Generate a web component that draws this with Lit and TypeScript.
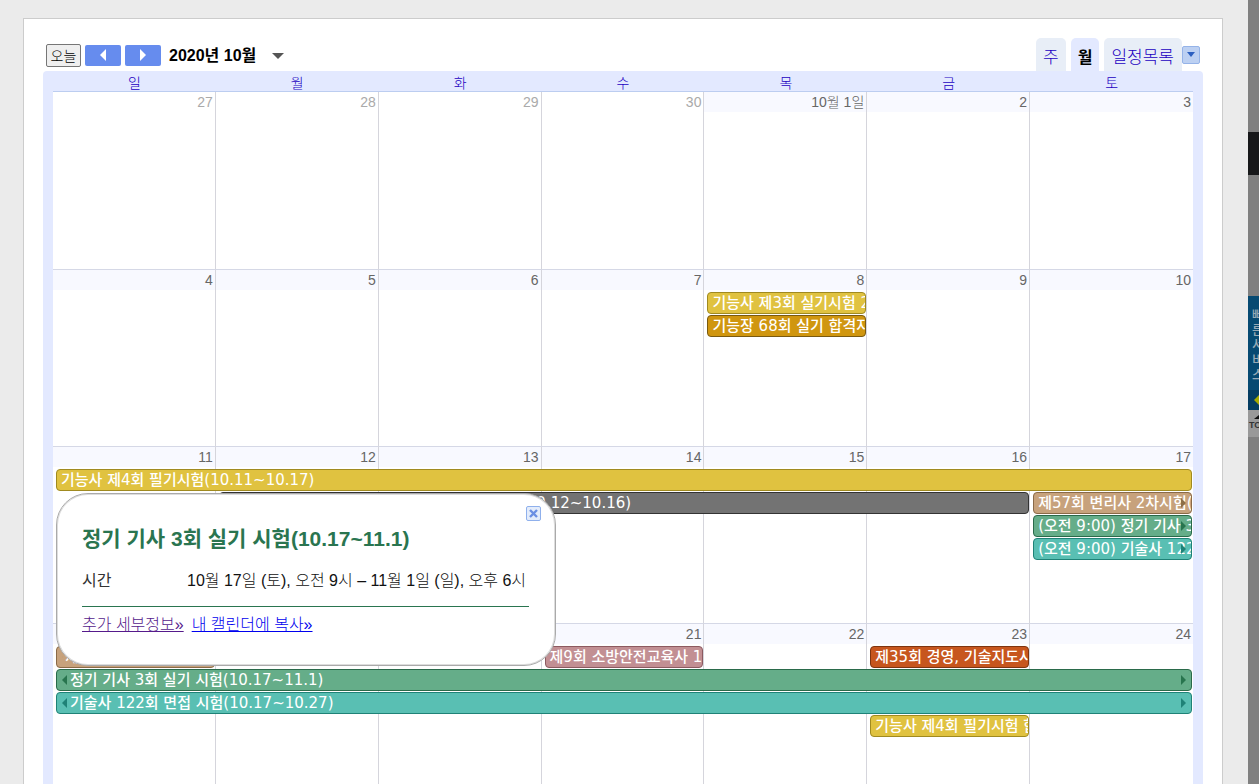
import { LitElement, html, svg, css, nothing } from "lit";
import { customElement, property } from "lit/decorators.js";
import { classMap } from "lit/directives/class-map.js";
import { styleMap } from "lit/directives/style-map.js";

interface CalEvent {
  title: string;
  tone: string;
  start: number;
  span: number;
  line: number;
  before?: boolean;
  after?: boolean;
}

interface Week {
  days: string[];
  outside?: number;
  events: CalEvent[];
  popup?: boolean;
}

const WEEKDAYS = ["일", "월", "화", "수", "목", "금", "토"];

const WEEKS: Week[] = [
  { days: ["27", "28", "29", "30", "10월 1일", "2", "3"], outside: 4, events: [] },
  {
    days: ["4", "5", "6", "7", "8", "9", "10"],
    events: [
      { title: "기능사 제3회 실기시험 2차", tone: "yellow", start: 5, span: 1, line: 2 },
      { title: "기능장 68회 실기 합격자", tone: "amber", start: 5, span: 1, line: 3 },
    ],
  },
  {
    days: ["11", "12", "13", "14", "15", "16", "17"],
    popup: true,
    events: [
      { title: "기능사 제4회 필기시험(10.11~10.17)", tone: "yellow", start: 1, span: 7, line: 2 },
      { title: "정기 기사 3회 실기 시험 및 기술사 122회 면접(10.12~10.16)", tone: "gray", start: 2, span: 5, line: 3 },
      { title: "제57회 변리사 2차시험(10.17~10.18)", tone: "tan", start: 7, span: 1, line: 3, after: true },
      { title: "(오전 9:00) 정기 기사 3회 실기 시험", tone: "green", start: 7, span: 1, line: 4, after: true },
      { title: "(오전 9:00) 기술사 122회 면접 시험", tone: "teal", start: 7, span: 1, line: 5, after: true },
    ],
  },
  {
    days: ["18", "19", "20", "21", "22", "23", "24"],
    events: [
      { title: "제57회 변리사 2차시험", tone: "tan", start: 1, span: 1, line: 2, before: true },
      { title: "제9회 소방안전교육사 1차", tone: "rose", start: 4, span: 1, line: 2 },
      { title: "제35회 경영, 기술지도사", tone: "orange", start: 6, span: 1, line: 2 },
      { title: "정기 기사 3회 실기 시험(10.17~11.1)", tone: "green", start: 1, span: 7, line: 3, before: true, after: true },
      { title: "기술사 122회 면접 시험(10.17~10.27)", tone: "teal", start: 1, span: 7, line: 4, before: true, after: true },
      { title: "기능사 제4회 필기시험 합격자", tone: "yellow", start: 6, span: 1, line: 5 },
    ],
  },
];

const tri = (d: string, w: number, h: number) => html`<svg width=${w} height=${h} viewBox="0 0 ${w} ${h}" aria-hidden="true">${svg`<path d=${d} fill="currentColor"/>`}</svg>`;

@customElement("event-popup")
export class EventPopup extends LitElement {
  static styles = css`
    :host {
      display: block;
      box-sizing: border-box;
      background: #fff;
      border: 1px solid #aaa;
      box-shadow: inset 0 0 0 1px #ddd;
      border-radius: 32px;
      padding: 30px 26px 30px 25px;
      font: 300 16px/20px "Liberation Sans", "Noto Sans CJK KR", sans-serif;
      color: #111;
    }
    .title {
      margin: 0;
      font-size: 21px;
      line-height: 30px;
      font-weight: 700;
      color: #2a7550;
      white-space: nowrap;
    }
    .row {
      display: grid;
      grid-template-columns: 105px 1fr;
      margin: 17px 0 15px;
      white-space: nowrap;
    }
    .row dt { color: #333; font-weight: 400; }
    .row dd { margin: 0; }
    .links {
      display: flex;
      gap: 8px;
      border-top: 1px solid #2a7550;
      padding-top: 8px;
    }
    a { color: #0000ee; }
    .visited { color: #551a8b; }
    .close {
      position: absolute;
      top: 12px;
      right: 14px;
      width: 15px;
      height: 15px;
      padding: 0;
      border: 0;
      background: none;
      display: block;
    }
    .close svg { display: block; }
  `;

  render() {
    return html`
      <button class="close" aria-label="닫기">
        <svg width="15" height="15" viewBox="0 0 15 15">
          <rect x=".5" y=".5" width="14" height="14" rx="1.5" fill="#e3ecfb" stroke="#8fb0ec" />
          <path d="M4 4l7 7M11 4l-7 7" stroke="#6b8fe3" stroke-width="2.4" />
        </svg>
      </button>
      <h2 class="title">정기 기사 3회 실기 시험(10.17~11.1)</h2>
      <dl class="row">
        <dt>시간</dt>
        <dd>10월 17일 (토), 오전 9시 – 11월 1일 (일), 오후 6시</dd>
      </dl>
      <div class="links">
        <a class="visited" href="#detail">추가 세부정보»</a>
        <a href="#copy">내 캘린더에 복사»</a>
      </div>
    `;
  }
}

@customElement("week-row")
export class WeekRow extends LitElement {
  @property({ attribute: false }) week!: Week;

  static styles = css`
    :host {
      display: grid;
      position: relative;
      box-sizing: border-box;
      min-height: 177px;
      grid-template-columns: repeat(7, minmax(0, 1fr));
      grid-template-rows: 23px repeat(4, 23px) 1fr;
    }
    .day {
      grid-row: 1 / -1;
      border-top: 1px solid #d5d8e6;
      border-right: 1px solid #d5d5dc;
      font: 300 14px/20px "Liberation Sans", "Noto Sans CJK KR", sans-serif;
      color: #666;
      text-align: right;
    }
    :host(.first) .day { border-top: 0; }
    .day:nth-of-type(7) { border-right: 0; }
    .num { display: block; background: #f8f9ff; padding-right: 2px; }
    .outside .num { background: #fff; color: #aaa; }
    .event {
      display: flex;
      align-items: center;
      position: relative;
      box-sizing: border-box;
      height: 22px;
      margin: 0 1px 0 3px;
      padding: 0 0 0 4px;
      border: 1px solid var(--edge);
      border-radius: 4px;
      background: var(--fill);
      color: #fff;
      font: 500 15px/20px "DejaVu Sans", "Noto Sans CJK KR", sans-serif;
      text-align: left;
      white-space: nowrap;
      overflow: hidden;
    }
    .label { flex: none; }
    .event svg { display: block; color: var(--mark); }
    .before { padding-left: 5px; gap: 3px; }
    .after svg:last-child {
      position: absolute;
      right: 5px;
      top: 5px;
    }
    .yellow { --fill: #e0c240; --edge: #a08a20; --mark: #806c10; }
    .amber { --fill: #d0960f; --edge: #7a5a10; --mark: #7a5a10; }
    .gray { --fill: #737373; --edge: #333; --mark: #333; }
    .tan { --fill: #c7a27c; --edge: #8a6a48; --mark: #8d6f47; }
    .green { --fill: #65ad89; --edge: #2a6a4a; --mark: #28754e; }
    .teal { --fill: #59bfb3; --edge: #1f8277; --mark: #1f8277; }
    .rose { --fill: #c28f93; --edge: #8c5a60; --mark: #8c5a60; }
    .orange { --fill: #c7561e; --edge: #7e3410; --mark: #7e3410; }
    event-popup {
      position: absolute;
      z-index: 2;
      left: 3px;
      top: 47px;
      width: 500px;
    }
  `;

  render() {
    const { days, outside = 0, events, popup } = this.week;
    return html`
      ${days.map(
        (d, i) => html`<div class=${classMap({ day: true, outside: i < outside })} style=${styleMap({ gridColumn: String(i + 1) })}><span class="num">${d}</span></div>`
      )}
      ${events.map(
        (e) => html`<button
          class=${classMap({ event: true, [e.tone]: true, before: !!e.before, after: !!e.after })}
          style=${styleMap({ gridColumn: `${e.start} / span ${e.span}`, gridRow: String(e.line) })}
        >${e.before ? tri("M5 0v10L0 5z", 5, 10) : nothing}<span class="label">${e.title}</span>${e.after ? tri("M0 0v10L5 5z", 5, 10) : nothing}</button>`
      )}
      ${popup ? html`<event-popup></event-popup>` : nothing}
    `;
  }
}

@customElement("app-root")
export class AppRoot extends LitElement {
  static styles = css`
    :host {
      display: grid;
      grid-template-columns: minmax(0, 1fr) 11px;
      height: 100vh;
      overflow: hidden;
      background: #ebebeb;
      font: 300 14px/20px "Liberation Sans", "Noto Sans CJK KR", sans-serif;
    }
    button { font-family: inherit; }
    .page { padding: 18px 25px 0 23px; }
    .panel {
      border: 1px solid #ccc;
      border-bottom: 0;
      background: #fff;
      padding: 19px 19px 0;
    }
    .bar { display: flex; justify-content: space-between; height: 33px; padding: 0 3px; }
    .nav { display: flex; align-items: center; gap: 4px; height: 34px; }
    .today {
      box-sizing: border-box;
      width: 35px;
      height: 23px;
      padding: 0;
      border: 1px solid #767676;
      border-radius: 2px;
      background: #efefef;
      color: #000;
      font-size: 14px;
      font-weight: 300;
      white-space: nowrap;
    }
    .step {
      display: grid;
      place-items: center;
      width: 36px;
      height: 21px;
      padding: 0;
      border: 0;
      border-radius: 2px;
      background: #668cee;
      color: #fff;
    }
    .month {
      display: flex;
      align-items: center;
      gap: 16px;
      margin-left: 4px;
      padding: 2px 0 0;
      border: 0;
      background: none;
      color: #000;
      font-size: 16px;
      line-height: 20px;
      font-weight: 700;
      white-space: nowrap;
    }
    .month svg { color: #555; }
    .tabs { display: flex; align-items: flex-end; }
    .tab {
      height: 33px;
      padding: 7px 7px 0;
      margin-right: 5px;
      border: 0;
      border-radius: 5px 5px 0 0;
      background: #e8eef7;
      color: #2200c1;
      font-size: 17px;
      line-height: 24px;
      font-weight: 300;
      white-space: nowrap;
    }
    .tab.on { background: #e3e9ff; color: #000; font-size: 16px; font-weight: 700; }
    .tab.last { margin-right: 0; padding-right: 8px; }
    .more {
      box-sizing: border-box;
      display: grid;
      place-items: center;
      align-self: center;
      width: 18px;
      height: 18px;
      padding: 0;
      border: 1px solid #95b3e8;
      border-radius: 2px;
      background: #bcd0f2;
      color: #2b5fc0;
    }
    .calendar {
      background: #e3e9ff;
      border-radius: 4px 4px 0 0;
      padding: 0 10px;
    }
    .names {
      display: grid;
      grid-template-columns: repeat(7, minmax(0, 1fr));
      height: 20px;
      border-bottom: 1px solid #bccdf0;
      color: #2200c1;
      font-size: 14px;
      line-height: 25px;
      text-align: center;
    }
    .weeks { background: #fff; }
    .side {
      display: flex;
      flex-direction: column;
      background: #808080;
      overflow: hidden;
    }
    .dark { margin-top: 132px; height: 43px; background: #17181a; }
    .banner {
      margin-top: 121px;
      height: 94px;
      background: #064a72;
      color: #98aab6;
      font: 500 13px/15px "Noto Sans CJK KR", sans-serif;
      box-sizing: border-box;
      padding: 10px 0 0 4px;
    }
    .banner span { display: block; white-space: nowrap; }
    .call { height: 20px; background: #043c62; color: #a5a800; padding-left: 6px; display: flex; align-items: center; }
    .top {
      height: 27px;
      background: #999;
      color: #333;
      font: 700 9px/12px "Liberation Sans", sans-serif;
      box-sizing: border-box;
      padding: 5px 0 0 1px;
    }
    .top svg { display: block; margin-left: 5px; color: #111; }
  `;

  render() {
    return html`
      <main class="page">
        <section class="panel">
          <div class="bar">
            <div class="nav">
              <button class="today">오늘</button>
              <button class="step" aria-label="이전">${tri("M6 0v12L0 6z", 6, 12)}</button>
              <button class="step" aria-label="다음">${tri("M0 0v12L6 6z", 6, 12)}</button>
              <button class="month">2020년 10월 ${tri("M0 0h12L6 6z", 12, 6)}</button>
            </div>
            <div class="tabs">
              <button class="tab">주</button>
              <button class="tab on">월</button>
              <button class="tab last">일정목록</button>
              <button class="more" aria-label="더보기">${tri("M0 0h8L4 5z", 8, 5)}</button>
            </div>
          </div>
          <div class="calendar">
            <div class="names">${WEEKDAYS.map((d) => html`<span>${d}</span>`)}</div>
            <div class="weeks">
              ${WEEKS.map((w, i) => html`<week-row class=${i === 0 ? "first" : ""} .week=${w}></week-row>`)}
            </div>
          </div>
        </section>
      </main>
      <aside class="side">
        <div class="dark"></div>
        <div class="banner"><span>빠</span><span>른</span><span>서</span><span>비</span><span>스</span></div>
        <div class="call">${tri("M5 0v10L0 5z", 5, 10)}</div>
        <div class="top">${tri("M0 4L5 0v4z", 5, 4)}TOP</div>
      </aside>
    `;
  }
}
